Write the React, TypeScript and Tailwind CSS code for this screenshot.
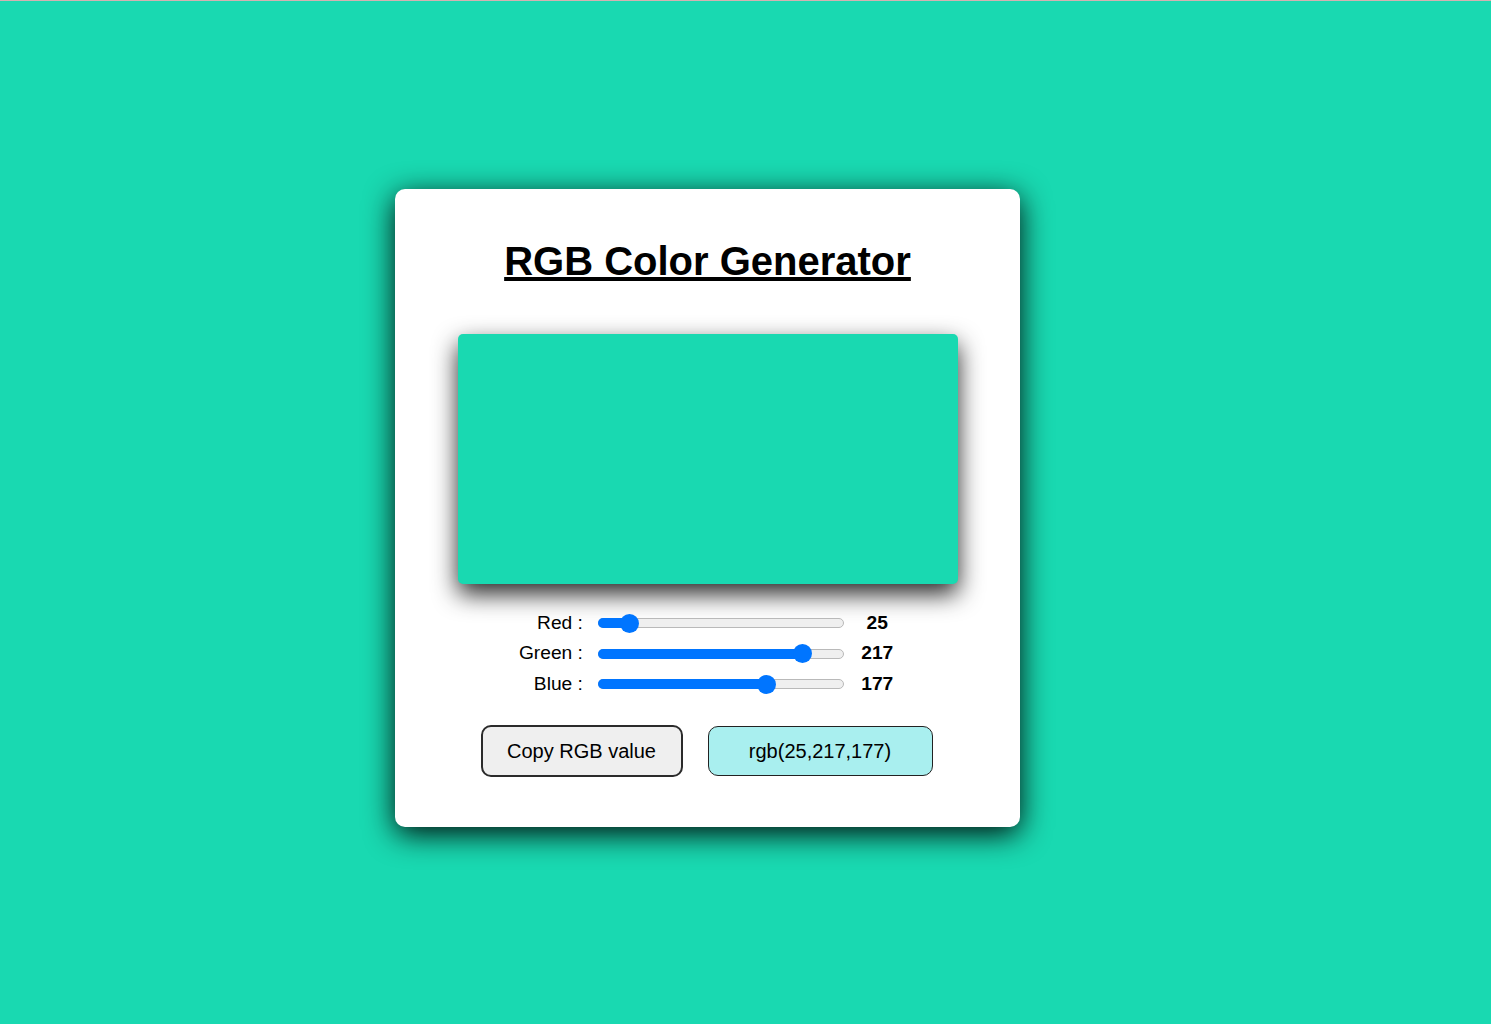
import { useState } from 'react';

type Channel = 'red' | 'green' | 'blue';

const labels: { key: Channel; text: string }[] = [
	{ key: 'red', text: 'Red :' },
	{ key: 'green', text: 'Green :' },
	{ key: 'blue', text: 'Blue :' },
];

const ColorSlider = ({
	id,
	value,
	onChange,
}: {
	id: string;
	value: number;
	onChange: (v: number) => void;
}) => {
	// thumb is 19px wide, so its centre runs from 9.5px to (248 - 9.5)px
	const centre = 9.5 + (229 * value) / 255;

	return (
		<div className="relative ml-[15px] h-[20px] w-[248px]">
			<div className="absolute left-0 right-0 top-[5px] h-[10px] rounded-full border border-[#b9b9b9] bg-[#efefef]" />
			<div
				className="absolute left-0 top-[5px] h-[10px] rounded-l-full bg-[#0075ff]"
				style={{ width: centre }}
			/>
			<div
				className="absolute top-[0.5px] h-[19px] w-[19px] rounded-full bg-[#0075ff]"
				style={{ left: centre - 9.5 }}
			/>
			<input
				id={id}
				type="range"
				min={0}
				max={255}
				value={value}
				onChange={(e) => onChange(Number(e.target.value))}
				className="absolute inset-0 h-full w-full cursor-pointer opacity-0"
			/>
		</div>
	);
};

export default function App() {
	const [rgb, setRgb] = useState<Record<Channel, number>>({ red: 25, green: 217, blue: 177 });

	const value = `rgb(${rgb.red},${rgb.green},${rgb.blue})`;

	const copyValue = () => {
		navigator.clipboard?.writeText(value).catch(() => {});
	};

	return (
		<div className="min-h-screen bg-[#19d9b1] font-['Liberation_Sans',Arial,sans-serif] text-black">
			<div className="h-px bg-[#d4b2b2]" />
			<div className="pl-[395px] pt-[188px]">
				<div className="flex h-[638px] w-[625px] flex-col items-center rounded-[10px] bg-white pt-[49px] shadow-[0_7px_30px_rgba(0,0,0,0.95)]">
					<h1 className="text-[40px] font-bold leading-[46px] underline">RGB Color Generator</h1>

					<div
						className="mt-[50px] h-[250px] w-[500px] rounded-[5px] shadow-[0_10px_24px_rgba(0,0,0,0.85)]"
						style={{ backgroundColor: value }}
					/>

					<div className="mt-[24px] flex w-[400px] flex-col text-[19.2px]">
						{labels.map((item) => (
							<div key={item.key} className="flex h-[30.5px] items-center">
								<label htmlFor={`${item.key}-range`} className="w-[76px] text-right">
									{item.text}
								</label>
								<ColorSlider
									id={`${item.key}-range`}
									value={rgb[item.key]}
									onChange={(v) => setRgb({ ...rgb, [item.key]: v })}
								/>
								<span className="w-[64px] pl-[3px] text-center font-bold">{rgb[item.key]}</span>
							</div>
						))}
					</div>

					<div className="mr-[2px] mt-[25.5px] flex items-center gap-[25px] text-[20px]">
						<button
							type="button"
							onClick={copyValue}
							className="h-[52px] w-[202px] rounded-[10px] border-2 border-[#2b2b2b] bg-[#efefef]"
						>
							Copy RGB value
						</button>
						<div className="flex h-[50px] w-[225px] items-center justify-center rounded-[10px] border border-[#222] bg-[#a9efef]">
							{value}
						</div>
					</div>
				</div>
			</div>
		</div>
	);
}
